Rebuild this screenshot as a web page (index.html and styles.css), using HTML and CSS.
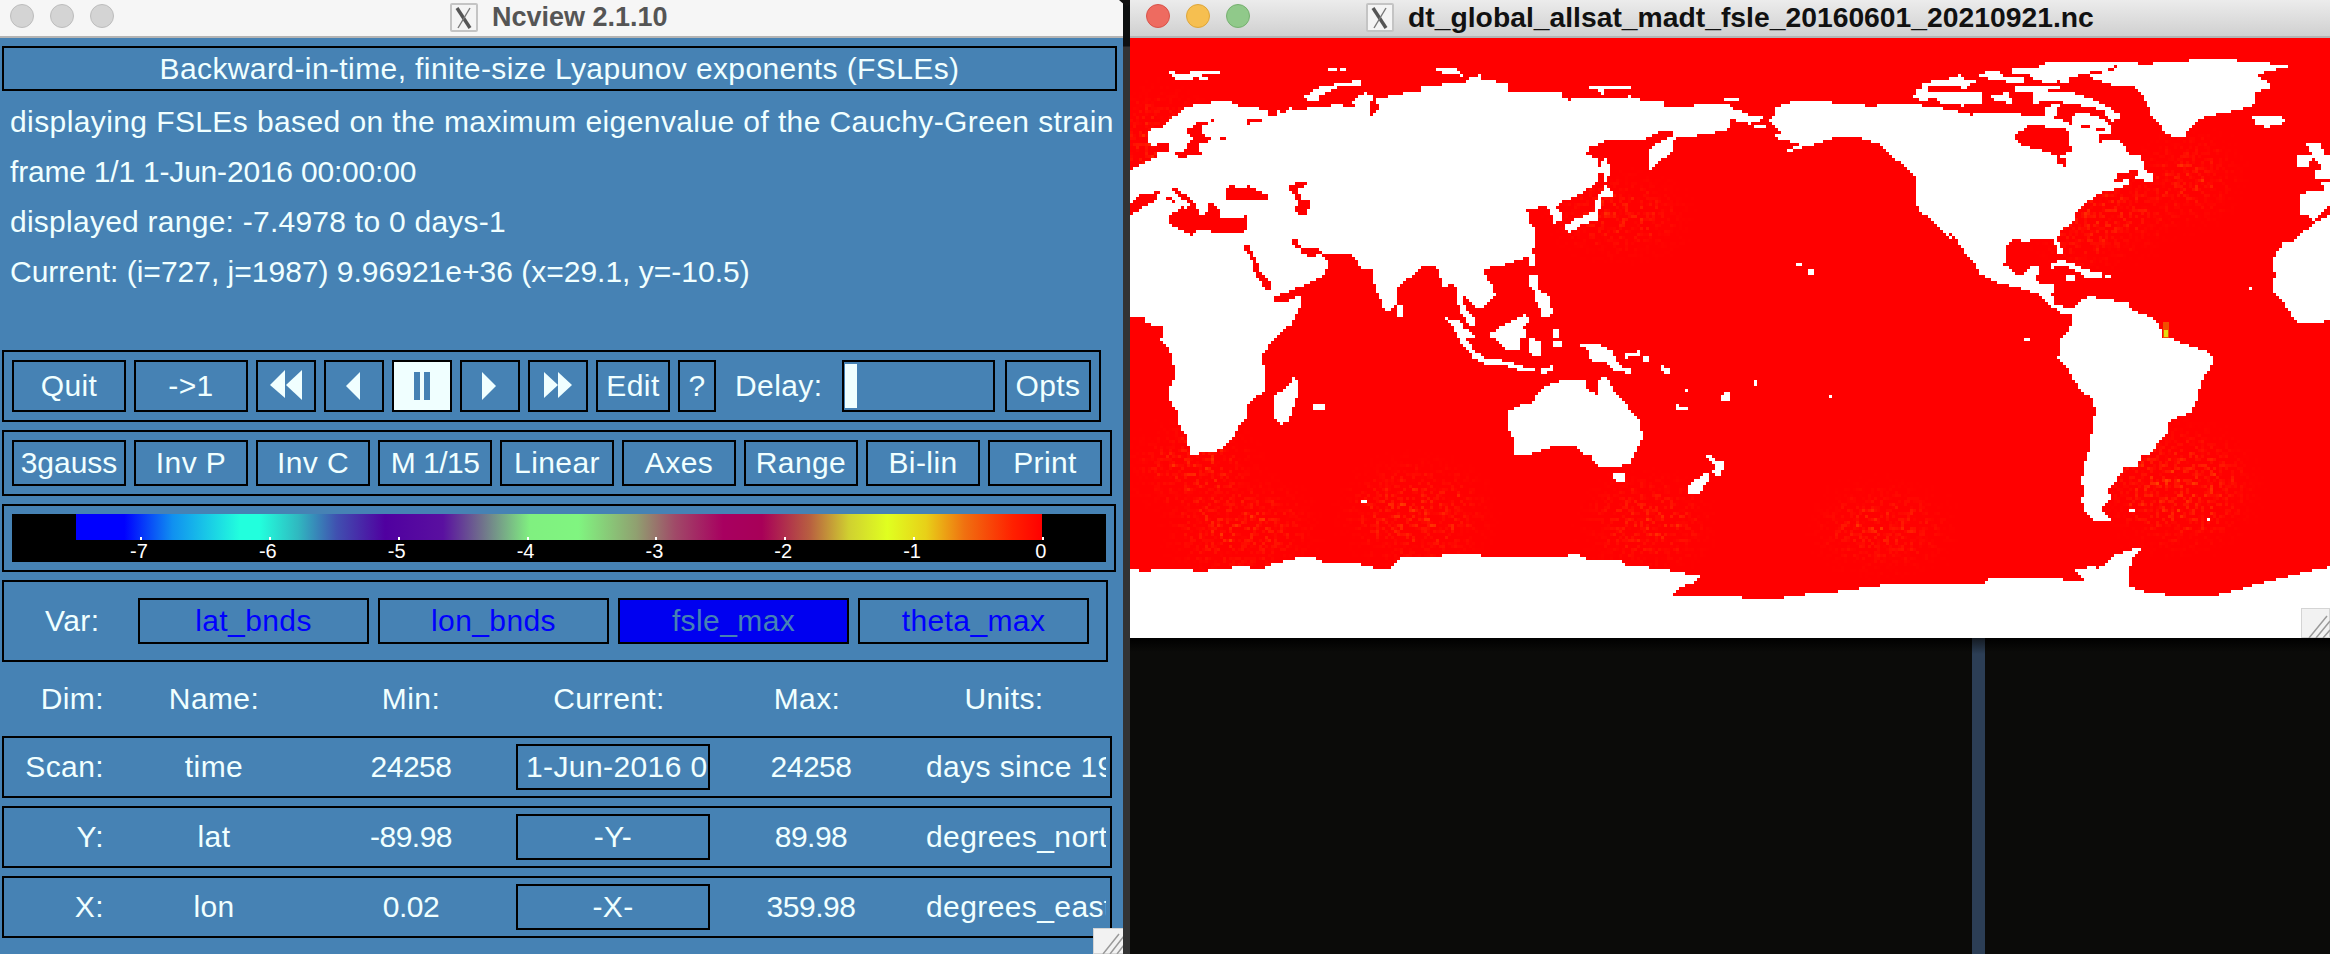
FILE: index.html
```html
<!DOCTYPE html>
<html lang="en">
<head>
<meta charset="utf-8">
<title>Ncview</title>
<link rel="stylesheet" href="styles.css">
</head>
<body>
<div class="desktop">
  <section class="panel">
    <header class="titlebar inactive">
      <div class="lights"><i class="light grey"></i><i class="light grey"></i><i class="light grey"></i></div>
      <div class="wintitle">
        <svg class="xicon" viewBox="0 0 28 29"><rect x="1" y="1" width="26" height="27" rx="1"/><path class="x1" d="M7 5 L20 25"/><path class="x2" d="M20 5 L8 25"/></svg>
        <span class="title-text grey-text">Ncview 2.1.10</span>
      </div>
    </header>
    <div class="panel-body">
      <div class="banner">Backward-in-time, finite-size Lyapunov exponents (FSLEs)</div>
      <div class="info">
        <div>displaying FSLEs based on the maximum eigenvalue of the Cauchy-Green strain</div>
        <div class="num">frame 1/1 1-Jun-2016 00:00:00</div>
        <div class="range">displayed range: -7.4978 to 0 days-1</div>
        <div class="cur-line">Current: (i=727, j=1987) 9.96921e+36 (x=29.1, y=-10.5)</div>
      </div>
      <div class="box controls">
        <div class="btn w114">Quit</div>
        <div class="btn w114">-&gt;1</div>
        <div class="btn w60"><svg viewBox="0 0 56 48"><polygon points="12,23 27,8 27,36"/><polygon points="28,23 44,8 44,38"/></svg></div>
        <div class="btn w60"><svg viewBox="0 0 56 48"><polygon points="20,24 34,10 34,38"/></svg></div>
        <div class="btn w60 on"><svg viewBox="0 0 56 48"><rect x="20" y="10" width="6" height="28"/><rect x="30" y="10" width="6" height="28"/></svg></div>
        <div class="btn w60"><svg viewBox="0 0 56 48"><polygon points="20,10 34,24 20,38"/></svg></div>
        <div class="btn w60"><svg viewBox="0 0 56 48"><polygon points="14,10 28,23 14,36"/><polygon points="28,10 42,23 28,36"/></svg></div>
        <div class="btn w74">Edit</div>
        <div class="btn w38">?</div>
        <div class="delay">Delay:</div>
        <div class="btn slider"><i class="thumb"></i></div>
        <div class="btn opts">Opts</div>
      </div>
      <div class="box options">
        <div class="btn w114 narrow">3gauss</div>
        <div class="btn w114">Inv P</div>
        <div class="btn w114">Inv C</div>
        <div class="btn w114 num-strong">M 1/15</div>
        <div class="btn w114">Linear</div>
        <div class="btn w114">Axes</div>
        <div class="btn w114">Range</div>
        <div class="btn w114">Bi-lin</div>
        <div class="btn w114">Print</div>
      </div>
      <div class="box cbar-box">
        <div class="cbar">
          <div class="gradient"></div>
          <div class="ticks">
            <span class="tick"><b>-7</b></span><span class="tick"><b>-6</b></span><span class="tick"><b>-5</b></span><span class="tick"><b>-4</b></span><span class="tick"><b>-3</b></span><span class="tick"><b>-2</b></span><span class="tick"><b>-1</b></span><span class="tick"><b>0</b></span>
          </div>
        </div>
      </div>
      <div class="box vars">
        <div class="var-label">Var:</div>
        <div class="btn var">lat_bnds</div>
        <div class="btn var">lon_bnds</div>
        <div class="btn var selected">fsle_max</div>
        <div class="btn var">theta_max</div>
      </div>
      <div class="grid dim-head">
        <div class="c-dim">Dim:</div><div class="c-name">Name:</div><div class="c-min">Min:</div><div class="c-cur head-cur">Current:</div><div class="c-max head-max">Max:</div><div class="c-units head-units">Units:</div>
      </div>
      <div class="box grid dim-row">
        <div class="c-dim">Scan:</div><div class="c-name">time</div><div class="c-min num-strong">24258</div><div class="c-cur cur-box left">1-Jun-2016 00:00:00</div><div class="c-max num-strong">24258</div><div class="c-units">days since 1950-01-01</div>
      </div>
      <div class="box grid dim-row">
        <div class="c-dim">Y:</div><div class="c-name">lat</div><div class="c-min num-strong">-89.98</div><div class="c-cur cur-box">-Y-</div><div class="c-max num-strong">89.98</div><div class="c-units">degrees_north</div>
      </div>
      <div class="box grid dim-row">
        <div class="c-dim">X:</div><div class="c-name">lon</div><div class="c-min num-strong">0.02</div><div class="c-cur cur-box">-X-</div><div class="c-max num-strong">359.98</div><div class="c-units">degrees_east</div>
      </div>
      <svg class="grip grip-left" viewBox="0 0 31 26"><rect width="31" height="26"/><path d="M10 26 L26 6 M17 26 L31 8 M24 26 L31 17"/></svg>
    </div>
  </section>

  <div class="divider"><svg class="notch" viewBox="0 0 16 6"><polygon points="0,0 16,0 9,6 7,6"/></svg></div>

  <div class="right-col">
    <section class="mapwin">
      <header class="titlebar active">
        <div class="lights"><i class="light red"></i><i class="light yellow"></i><i class="light green"></i></div>
        <div class="wintitle">
          <svg class="xicon" viewBox="0 0 28 29"><rect x="1" y="1" width="26" height="27" rx="1"/><path class="x1" d="M7 5 L20 25"/><path class="x2" d="M20 5 L8 25"/></svg>
          <span class="title-text dark-text">dt_global_allsat_madt_fsle_20160601_20210921.nc</span>
        </div>
      </header>
      <div class="mapwrap">
        <svg class="map" viewBox="0 0 1200 600" width="1200" height="600" shape-rendering="crispEdges">
          <defs>
            <filter id="px" filterUnits="userSpaceOnUse" x="0" y="0" width="1200" height="600" color-interpolation-filters="sRGB">
              <feFlood x="1" y="1" width="1" height="1" flood-color="#fff"/>
              <feComposite width="3" height="3"/>
              <feTile result="a"/>
              <feComposite in="SourceGraphic" in2="a" operator="in"/>
              <feMorphology operator="dilate" radius="1"/>
            </filter>
            <filter id="noise" filterUnits="userSpaceOnUse" x="0" y="0" width="1200" height="600" color-interpolation-filters="sRGB">
              <feGaussianBlur in="SourceGraphic" stdDeviation="16" result="soft"/>
              <feTurbulence type="fractalNoise" baseFrequency="0.2" numOctaves="2" seed="7"/>
              <feColorMatrix values="0 0 0 0 1  0 0 0 0 0.3  0 0 0 0 0  3 0 0 0 -1.5" result="n"/>
              <feComposite in="n" in2="soft" operator="in"/>
            </filter>
          </defs>
          <rect class="ocean" width="1200" height="600"/>
          <g filter="url(#px)">
          <g filter="url(#noise)" class="warm">
            <ellipse cx="65" cy="430" rx="45" ry="22"/>
            <ellipse cx="110" cy="490" rx="55" ry="28"/>
            <ellipse cx="287" cy="475" rx="55" ry="32"/>
            <ellipse cx="517" cy="485" rx="45" ry="26"/>
            <ellipse cx="753" cy="490" rx="50" ry="22"/>
            <ellipse cx="1050" cy="450" rx="55" ry="42"/>
            <ellipse cx="983" cy="175" rx="45" ry="18"/>
            <ellipse cx="1059" cy="140" rx="30" ry="25"/>
            <ellipse cx="956" cy="195" rx="30" ry="16"/>
            <ellipse cx="490" cy="178" rx="50" ry="18"/>
            <ellipse cx="30" cy="100" rx="30" ry="30"/>
          </g>
          </g>
          <g filter="url(#px)">
            <g transform="scale(0.38265 0.33333)">
              <polygon class="land" points="0,400 20,385 40,370 70,358 70,330 47,315 47,285 55,270 88,265 105,245 135,220 150,205 205,195 245,188 270,195 285,203 330,208 360,218 365,235 385,232 385,215 400,225 420,210 440,215 470,210 515,208 525,200 590,205 595,215 580,190 600,175 615,165 635,170 640,210 640,175 660,180 690,170 720,165 760,160 765,145 830,138 870,135 890,120 915,110 920,125 985,135 990,165 1030,165 1125,165 1130,180 1145,185 1200,180 1310,175 1340,190 1390,190 1400,205 1470,205 1480,198 1570,200 1570,272 1500,290 1440,300 1425,300 1420,325 1415,345 1385,370 1360,398 1355,338 1375,320 1420,292 1420,280 1380,283 1350,300 1360,310 1290,310 1240,310 1200,330 1190,350 1225,360 1228,400 1220,430 1185,465 1130,490 1115,510 1130,525 1130,550 1105,555 1100,520 1085,505 1055,510 1025,512 1040,525 1040,545 1060,575 1060,620 1045,650 1020,665 970,685 930,690 925,710 945,735 955,770 920,810 905,810 875,770 868,785 880,820 905,845 905,875 880,850 860,820 855,770 850,740 820,745 800,680 765,685 745,705 700,745 695,800 680,820 665,815 650,770 640,745 632,690 605,690 580,650 500,648 520,680 505,715 460,740 380,775 380,790 410,790 445,770 450,800 430,840 420,860 385,890 380,902 84,902 84,865 45,858 35,840 0,840"/>
              <polygon class="sea" points="0,495 30,470 75,460 105,490 135,500 135,515 100,530 100,560 135,575 165,592 175,575 240,585 300,585 308,535 240,540 225,500 205,495 205,525 185,530 165,485 115,447 110,455 155,500 145,515 110,480 90,475 0,530"/>
              <polygon class="land" points="72,470 88,470 88,515 72,515"/>
              <polygon class="sea" points="247,485 250,460 270,437 280,450 310,445 345,460 360,475 360,485"/>
              <polygon class="sea" points="408,450 430,435 460,433 460,443 440,450 445,480 468,490 465,530 445,535 430,520 440,490 425,465"/>
              <polygon class="sea" points="150,275 185,250 220,247 190,265 185,290 215,300 205,312 180,320 185,350 130,358 105,350 145,335 150,320 165,300 150,290"/>
              <polygon class="sea" points="70,315 100,312 105,340 70,340"/>
              <polygon class="sea" points="235,295 250,295 250,305 235,305"/>
              <polygon class="sea" points="423,600 435,603 445,625 495,632 500,650 475,655 450,650 445,635 425,620"/>
              <polygon class="sea" points="298,625 312,625 325,660 340,680 340,700 358,720 372,735 372,768 350,745 325,705 320,665 300,640"/>
              <polygon class="sea" points="305,240 345,240 340,252 310,258"/>
              <polygon class="sea" points="630,190 645,190 650,215 630,235"/>
              <polygon class="land" points="100,103 160,105 160,97 235,97 232,105 185,108 208,125 185,125 180,115 150,130 125,130"/>
              <polygon class="land" points="450,180 470,165 500,145 600,127 600,140 545,145 510,165 490,175 500,190 470,190"/>
              <polygon class="land" points="800,95 830,85 865,100 870,113 830,110"/>
              <polygon class="land" points="517,90 540,90 540,98 517,98"/>
              <polygon class="land" points="548,90 566,90 566,98 548,98"/>
              <polygon class="land" points="1198,140 1260,140 1265,147 1310,145 1310,155 1240,155 1240,170 1228,165 1225,150 1198,150"/>
              <polygon class="land" points="1555,180 1570,180 1570,192 1555,192"/>
              <polygon class="land" points="1135,565 1160,545 1215,520 1220,480 1235,460 1265,458 1265,475 1235,480 1228,500 1225,545 1180,560 1145,588"/>
              <polygon class="land" points="1228,390 1240,360 1250,365 1252,410 1240,440 1250,450 1262,458 1235,460 1238,410"/>
              <polygon class="land" points="1042,650 1062,650 1062,680 1042,680"/>
              <polygon class="land" points="1045,715 1065,715 1065,755 1090,770 1100,790 1104,830 1075,838 1068,800 1060,790 1062,760 1045,750"/>
              <polygon class="land" points="945,885 985,855 1030,830 1042,845 1030,870 1035,902 940,902"/>
              <polygon class="land" points="825,840 860,848 875,870 900,890 905,902 860,902 845,870"/>
              <polygon class="land" points="695,805 712,805 716,840 695,840"/>
              <polygon class="land" points="1105,870 1125,870 1125,902 1105,902"/>
            </g>
            <g transform="translate(600 0) scale(0.38265 0.33333)">
              <polygon class="land" points="-4,180 20,180 20,192 -4,192"/>
              <polygon class="land" points="-4,205 40,225 50,232 88,235 88,245 50,257 -4,242"/>
              <polygon class="land" points="105,240 120,232 120,212 145,195 200,185 280,195 330,198 365,205 420,197 480,200 530,205 575,215 630,230 680,225 740,228 800,232 860,240 890,260 960,275 1000,282 965,290 965,312 1005,300 1030,320 1035,345 1075,355 1085,400 1105,410 1108,430 1060,425 1065,395 1030,405 985,403 1010,410 1005,432 1040,425 1045,440 990,460 960,465 955,480 930,490 905,525 900,545 865,580 855,600 870,640 860,650 845,600 795,600 780,610 745,605 720,620 717,680 750,712 775,705 785,685 810,685 800,720 805,737 848,742 842,770 845,800 895,810 935,775 960,780 1040,795 1045,810 1110,845 1122,855 1126,880 1128,903 868,903 893,860 890,830 865,825 835,800 805,770 750,745 710,740 650,705 645,680 600,640 575,600 545,570 495,515 485,490 485,415 450,380 420,350 390,320 340,300 285,295 245,310 200,325 130,352 185,315 130,305 115,295 135,285 105,252"/>
              <polygon class="sea" points="742,295 780,265 810,262 840,270 885,275 888,320 898,325 890,345 855,350 870,362 882,365 882,384 857,380 852,350 820,340 760,320 745,305"/>
              <polygon class="sea" points="572,590 582,588 600,620 618,652 612,672 598,650 590,625"/>
              <polygon class="land" points="940,112 1000,95 1030,75 1095,78 1190,68 1300,62 1350,72 1458,80 1455,90 1400,100 1380,115 1405,130 1410,150 1370,165 1370,200 1330,215 1270,230 1230,240 1205,265 1185,298 1140,290 1125,260 1100,230 1090,200 1080,170 1060,148 1000,140 960,128"/>
              <polygon class="land" points="735,95 760,85 800,90 830,75 870,70 980,68 1030,75 985,95 930,105 890,120 885,135 860,130 830,135 800,125 780,110 735,105"/>
              <polygon class="land" points="650,105 700,100 720,120 690,125 650,115"/>
              <polygon class="land" points="500,135 560,125 605,110 610,125 640,130 620,150 560,145 505,150"/>
              <polygon class="land" points="710,115 770,120 760,140 720,130"/>
              <polygon class="land" points="478,180 490,155 550,160 620,165 660,165 660,195 610,203 555,195 530,180 505,190"/>
              <polygon class="land" points="680,170 730,165 735,195 690,190"/>
              <polygon class="land" points="740,145 860,140 870,155 800,160 750,160"/>
              <polygon class="land" points="790,165 880,160 940,180 990,210 1025,235 1000,250 985,235 975,215 930,205 900,200 860,190 790,195"/>
              <polygon class="land" points="820,205 860,200 850,235 820,235"/>
              <polygon class="land" points="900,230 935,225 985,250 1000,280 960,270 890,255"/>
              <polygon class="land" points="1365,235 1400,238 1445,235 1448,255 1405,268 1375,260"/>
              <polygon class="land" points="1480,355 1520,355 1515,385 1480,385"/>
              <polygon class="land" points="1505,315 1545,320 1555,350 1572,355 1572,425 1530,425 1530,400 1550,395 1520,350"/>
              <polygon class="land" points="1572,432 1535,432 1555,445 1555,460 1490,465 1487,530 1515,535 1525,545 1572,495"/>
              <polygon class="land" points="1572,527 1515,565 1480,605 1445,615 1420,660 1420,690 1425,710 1418,755 1450,800 1480,850 1510,857 1572,848"/>
              <polygon class="land" points="835,680 860,665 900,680 930,695 970,705 970,720 930,720 910,700 870,682 840,690"/>
              <polygon class="land" points="880,712 905,712 905,725 880,725"/>
              <polygon class="land" points="980,712 998,712 998,722 980,722"/>
              <polygon class="land" points="170,676 186,676 186,686 170,686"/>
              <polygon class="land" points="204,690 220,690 220,712 204,712"/>
              <polygon class="land" points="66,262 94,262 94,272 66,272"/>
              <polygon class="land" points="1355,745 1366,745 1366,755 1355,755"/>
            </g>
            <g transform="translate(0 300) scale(0.38265 0.33333)">
              <polygon class="land" points="75,-4 105,40 120,110 100,160 100,185 125,220 130,265 145,290 160,348 195,345 240,335 270,300 290,255 310,235 305,200 330,175 355,160 355,100 343,55 378,-4"/>
              <polygon class="land" points="380,170 410,150 425,120 438,125 435,185 415,250 395,258 378,245"/>
              <polygon class="land" points="988,220 1010,205 1050,195 1065,165 1085,145 1130,125 1190,125 1190,150 1220,172 1230,110 1250,125 1270,170 1300,205 1335,250 1338,300 1320,340 1305,380 1240,390 1220,380 1200,350 1180,345 1165,325 1125,320 1080,335 1035,352 1005,352 1005,315 990,270"/>
              <polygon class="land" points="1262,408 1292,408 1292,430 1270,438"/>
              <polygon class="land" points="1505,350 1520,352 1530,370 1558,375 1540,415 1515,405 1530,385"/>
              <polygon class="land" points="1500,405 1518,410 1490,468 1455,468 1455,450"/>
              <polygon class="land" points="600,486 618,486 618,498 600,498"/>
              <polygon class="land" points="950,-4 1025,-4 1015,40 990,38"/>
              <polygon class="land" points="858,5 870,-4 900,35 925,60 990,70 1025,85 1058,95 1058,103 1020,97 980,82 925,78 900,62"/>
              <polygon class="land" points="1040,-4 1075,10 1078,55 1050,58 1040,30"/>
              <polygon class="land" points="1170,15 1225,20 1260,40 1285,90 1312,95 1312,108 1270,98 1240,72 1205,68 1200,40"/>
              <polygon class="land" points="1105,8 1130,8 1130,30 1105,30"/>
              <polygon class="land" points="1072,95 1105,82 1105,98 1072,108"/>
              <polygon class="land" points="1290,50 1335,38 1335,50 1290,62"/>
              <polygon class="land" points="1340,55 1360,55 1360,72 1340,72"/>
              <polygon class="land" points="1385,80 1408,90 1408,106 1385,100"/>
              <polygon class="land" points="1428,196 1440,205 1460,212 1460,222 1430,214"/>
              <polygon class="land" points="1545,170 1570,162 1570,186 1545,186"/>
              <polygon class="land" points="1448,150 1460,150 1460,166 1448,166"/>
              <polygon class="land" points="478,203 508,196 508,216 478,216"/>
              <polygon class="land" points="0,690 30,700 120,692 190,700 290,685 345,693 370,680 440,660 470,655 500,670 610,680 650,695 680,690 712,655 770,660 830,650 900,650 960,660 1060,660 1170,650 1200,665 1280,668 1295,680 1400,695 1490,715 1475,737 1440,745 1418,770 1430,778 1572,778 1572,904 0,904"/>
            </g>
            <g transform="translate(600 300) scale(0.38265 0.33333)">
              <polygon class="land" points="862,-4 858,65 880,85 900,130 920,160 950,185 955,220 945,290 935,350 925,375 920,430 925,460 918,490 930,525 960,552 998,552 985,530 968,510 998,480 985,460 1005,440 1015,415 1030,390 1065,385 1075,350 1105,345 1115,315 1145,285 1148,250 1175,235 1205,225 1225,175 1230,130 1255,95 1265,55 1235,35 1180,15 1150,-4"/>
              <polygon class="land" points="0,778 130,780 190,770 290,760 370,745 470,735 620,735 665,735 675,720 730,718 780,720 880,725 925,725 905,697 945,685 965,690 1010,650 1060,630 1072,635 1050,660 1045,700 1045,745 1095,765 1180,775 1260,775 1360,745 1480,708 1572,685 1572,904 0,904"/>
              <polygon class="land" points="60,130 70,130 70,140 60,140"/>
              <polygon class="land" points="258,172 268,172 268,182 258,182"/>
              <polygon class="land" points="1045,510 1062,510 1062,522 1045,522"/>
              <polygon class="land" points="1245,538 1256,538 1256,548 1245,548"/>
              <polygon class="land" points="768,-4 786,-4 786,10 768,10"/>
            </g>
          </g>
          <rect class="spot1" x="1033" y="284" width="6" height="16"/>
          <rect class="spot2" x="1034" y="292" width="4" height="7"/>
        </svg>
        <svg class="grip grip-right" viewBox="0 0 29 30"><rect width="29" height="30"/><path d="M8 30 L26 8 M15 30 L29 13 M22 30 L29 22"/></svg>
      </div>
    </section>
    <div class="backdrop"><div class="strip"></div></div>
  </div>
</div>
</body>
</html>
```
FILE: styles.css
```css
* { box-sizing: border-box; }
html, body { margin: 0; padding: 0; width: 2330px; height: 954px; overflow: hidden; background: #0b0b09; }
body { font-family: "Liberation Sans", Arial, sans-serif; }

.desktop { display: flex; width: 2330px; height: 954px; }

.titlebar { position: relative; height: 38px; border-bottom: 2px solid #b4b4b4; flex: none; }
.titlebar.inactive { background: #f6f6f6; }
.titlebar.active { background: linear-gradient(#ececec, #d0d0d0); }
.lights { position: absolute; top: 4px; display: flex; }
.inactive .lights { left: 10px; gap: 16px; }
.active .lights { left: 16px; gap: 16px; }
.light { display: block; width: 24px; height: 24px; border-radius: 50%; }
.grey { background: #d4d4d4; border: 1px solid #bdbdbd; }
.red { background: #ee6b60; border: 1px solid #d9534a; }
.yellow { background: #f6bf50; border: 1px solid #dea63a; }
.green { background: #90c98a; border: 1px solid #76b070; }

.wintitle { position: absolute; top: 3px; display: flex; align-items: center; height: 29px; }
.inactive .wintitle { left: 450px; gap: 14px; }
.active .wintitle { left: 236px; gap: 14px; }
.xicon { width: 28px; height: 29px; flex: none; }
.xicon rect { fill: #f4f4f4; stroke: #c4c4c4; stroke-width: 2; }
.x1 { fill: none; stroke: #555; stroke-width: 3.4; }
.x2 { fill: none; stroke: #777; stroke-width: 1.4; }
.title-text { white-space: nowrap; font-weight: 700; }
.grey-text { color: #555; font-size: 27px; }
.dark-text { color: #111; font-size: 28.3px; }

.panel { width: 1123px; flex: none; display: flex; flex-direction: column; }
.panel-body { position: relative; flex: 1; background: #4682b4; color: #f0ffff; font-size: 30px; letter-spacing: 0.4px; padding: 8px 0 0 2px; }

.box { border: 2px solid #000; }
.banner { width: 1115px; height: 45px; border: 2px solid #000; display: flex; align-items: center; justify-content: center; }
.info { height: 259px; padding: 6px 0 0 8px; white-space: nowrap; }
.info div { height: 50px; line-height: 50px; }
.info .num { letter-spacing: -0.2px; }
.info .range { letter-spacing: 0.25px; }
.info .cur-line { letter-spacing: 0; }
.num-strong { letter-spacing: -0.5px; }

.btn { border: 2px solid #000; height: 100%; display: flex; align-items: center; justify-content: center; flex: none; overflow: hidden; white-space: nowrap; }
.btn svg { display: block; width: 56px; height: 48px; fill: #f0ffff; flex: none; }
.btn.on { background: #f0ffff; }
.btn.on svg { fill: #4682b4; }
.w114 { width: 114px; }
.w60 { width: 60px; }
.w74 { width: 74px; }
.w38 { width: 38px; }
.narrow { letter-spacing: 0; }

.controls, .options, .vars { display: flex; gap: 8px; }
.controls { width: 1099px; height: 72px; padding: 8px; }
.delay { width: 110px; padding-left: 11px; flex: none; align-self: center; white-space: nowrap; }
.slider { width: 153px; justify-content: flex-start; padding: 2px 0 2px 1px; margin-right: 2px; }
.thumb { display: block; width: 12px; height: 44px; background: #f0ffff; }
.opts { width: 86px; }

.options { width: 1110px; height: 66px; margin-top: 8px; padding: 8px; }

.cbar-box { width: 1114px; height: 68px; margin-top: 8px; padding: 8px; }
.cbar { width: 1094px; height: 48px; background: #000; position: relative; }
.gradient { position: absolute; left: 64px; top: 0; width: 966px; height: 26px;
  background: linear-gradient(90deg, #0000ff 0, #0000ff 5%, #1090f0 10%, #22ffdd 17%, #22ffdd 19%, #30b8c0 23%, #4050b0 27%, #5000a0 32%, #5a10a0 38%, #70708c 42%, #80f080 47%, #80f580 52%, #90a070 58%, #a04a68 62%, #a80060 67%, #a80058 71%, #b86040 76%, #d0d030 80%, #e0ff20 84%, #e8d018 88%, #f07010 92%, #ff2000 97%, #ff0000 100%); }
.ticks { position: absolute; left: 128px; top: 0; width: 904px; height: 48px; display: flex; justify-content: space-between; }
.tick { position: relative; width: 2px; height: 26px; }
.tick::before { content: ""; position: absolute; left: 0; top: 23px; width: 2px; height: 3px; background: #fff; }
.tick b { position: absolute; top: 25px; left: -19px; width: 36px; text-align: center; font-weight: 400; font-size: 20px; letter-spacing: 0; line-height: 24px; color: #fff; }

.vars { width: 1106px; height: 82px; margin-top: 8px; padding: 16px 17px 16px 0; align-items: stretch; gap: 9px; }
.var-label { width: 125px; flex: none; padding-left: 41px; align-self: center; }
.var { width: 231px; color: #0000ff; }
.selected { background: #0000f0; color: #4682b4; }

.grid { display: grid; grid-template-columns: 92px 220px 192px 194px 216px 180px; align-items: center; }
.c-dim { text-align: right; }
.c-name, .c-min, .c-max { text-align: center; }
.c-min { margin-right: 18px; }
.c-max { margin-right: 14px; }
.c-units, .cur-box { overflow: hidden; white-space: nowrap; }
.dim-head { width: 1110px; height: 74px; padding: 0 6px 0 10px; }
.head-cur { text-align: center; margin-right: 8px; }
.head-max { margin-right: 22px; }
.head-units { text-align: center; padding-right: 24px; }
.dim-row { width: 1110px; height: 62px; padding: 0 4px 0 8px; margin-bottom: 8px; }
.cur-box { border: 2px solid #000; height: 46px; display: flex; align-items: center; justify-content: center; }
.cur-box.left { justify-content: flex-start; padding-left: 8px; }

.grip { position: absolute; display: block; }
.grip rect { fill: #f2f2f2; stroke: #d4d4d4; stroke-width: 2; }
.grip path { fill: none; stroke: #9a9a9a; stroke-width: 1.5; }
.grip-left { right: -1px; bottom: 0; width: 31px; height: 26px; }
.grip-right { right: 0; bottom: 0; width: 29px; height: 30px; }

.divider { width: 7px; flex: none; background: linear-gradient(#0d0f10 46px, #333 47px); position: relative; }
.notch { position: absolute; left: -4px; top: 0; width: 16px; height: 6px; fill: #111; }

.right-col { width: 1200px; flex: none; display: flex; flex-direction: column; }
.mapwin { flex: none; }
.mapwrap { position: relative; width: 1200px; height: 600px; }
.map { display: block; }
.ocean { fill: #ff0000; }
.warm ellipse { fill: #ff6000; }
.land { fill: #fff; }
.sea { fill: #ff0000; }
.spot1 { fill: #f05000; }
.spot2 { fill: #e4dc10; }

.backdrop { flex: 1; position: relative; background: linear-gradient(#000 0, #0b0b09 14px); }
.strip { position: absolute; left: 842px; top: 0; bottom: 0; width: 13px; background: linear-gradient(#141a22 0, #2c3e55 16px); }
```
